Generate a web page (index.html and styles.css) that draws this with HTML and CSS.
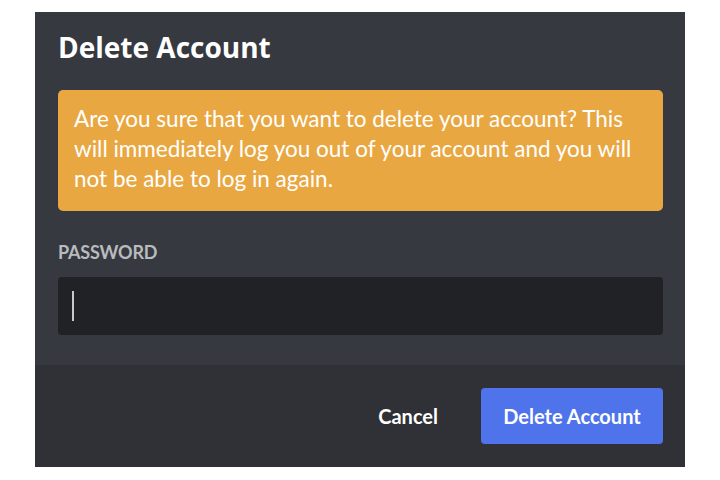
FILE: index.html
```html
<!DOCTYPE html>
<html lang="en">
<head>
<meta charset="utf-8">
<title>Delete Account</title>
<link rel="stylesheet" href="styles.css">
</head>
<body>
<div class="modal">
  <div class="content">
    <h1 class="title">Delete Account</h1>
    <div class="warning">Are you sure that you want to delete your account? This will immediately log you out of your account and you will not be able to log in again.</div>
    <div class="label">PASSWORD</div>
    <div class="input"><span class="caret"></span></div>
  </div>
  <div class="footer">
    <button class="btn-cancel">Cancel</button>
    <button class="btn-delete">Delete Account</button>
  </div>
</div>
</body>
</html>
```
FILE: styles.css
```css
html, body {
  margin: 0;
  padding: 0;
  background: #ffffff;
}
body {
  font-family: Lato, "Open Sans", sans-serif;
  padding: 12px 0 0 35px;
}
.modal {
  width: 650px;
  height: 455px;
  display: flex;
  flex-direction: column;
  background: #36393f;
}
.content {
  display: flex;
  flex-direction: column;
  padding: 17px 22px 30px 23px;
  height: 306px;
}
.title {
  margin: 0;
  font-family: "Open Sans", sans-serif;
  font-weight: 700;
  font-size: 28px;
  line-height: 36px;
  letter-spacing: 0;
  color: #ffffff;
}
.warning {
  margin-top: 25px;
  background: #e9a742;
  border-radius: 5px;
  padding: 14px 16px 17px 16px;
  color: #ffffff;
  font-size: 22.5px;
  line-height: 30px;
}
.label {
  margin-top: 29px;
  font-weight: 700;
  font-size: 18px;
  line-height: 24px;
  letter-spacing: -0.2px;
  color: #b9bbbe;
}
.input {
  margin-top: 13px;
  height: 58px;
  background: #202225;
  border-radius: 4px;
  display: flex;
  align-items: center;
  padding-left: 14px;
}
.caret {
  width: 2px;
  height: 30px;
  background: #c8c9cb;
}
.footer {
  flex: 1;
  background: #2f3136;
  display: flex;
  align-items: center;
  justify-content: flex-end;
  padding-right: 22px;
  gap: 43px;
}
.btn-cancel {
  background: none;
  border: none;
  padding: 0;
  color: #ffffff;
  font-family: Lato, sans-serif;
  font-weight: 700;
  font-size: 20px;
}
.btn-delete {
  width: 182px;
  height: 56px;
  background: #4f73eb;
  border: none;
  border-radius: 4px;
  color: #ffffff;
  font-family: Lato, sans-serif;
  font-weight: 700;
  font-size: 20px;
  padding: 0;
}
```
